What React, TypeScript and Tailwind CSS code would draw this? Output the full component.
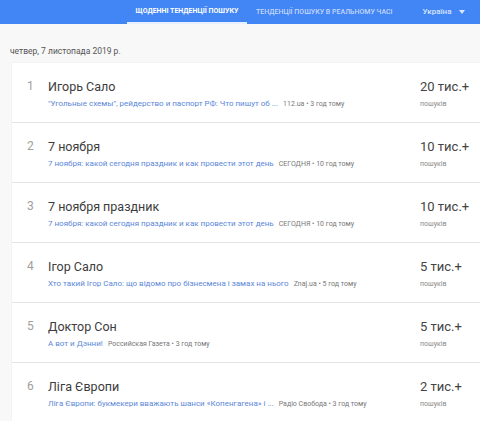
const items = [
  {
    title: "Игорь Сало",
    link: "\"Угольные схемы\", рейдерство и паспорт РФ: Что пишут об ...",
    source: "112.ua • 3 год тому",
    count: "20 тис.+",
  },
  {
    title: "7 ноября",
    link: "7 ноября: какой сегодня праздник и как провести этот день",
    source: "СЕГОДНЯ • 10 год тому",
    count: "10 тис.+",
  },
  {
    title: "7 ноября праздник",
    link: "7 ноября: какой сегодня праздник и как провести этот день",
    source: "СЕГОДНЯ • 10 год тому",
    count: "10 тис.+",
  },
  {
    title: "Ігор Сало",
    link: "Хто такий Ігор Сало: що відомо про бізнесмена і замах на нього",
    source: "Znaj.ua • 5 год тому",
    count: "5 тис.+",
  },
  {
    title: "Доктор Сон",
    link: "А вот и Дэнни!",
    source: "Российская Газета • 3 год тому",
    count: "5 тис.+",
  },
  {
    title: "Ліга Європи",
    link: "Ліга Європи: букмекери вважають шанси «Копенгагена» і ...",
    source: "Радіо Свобода • 3 год тому",
    count: "2 тис.+",
  },
];

export default function App() {
  return (
    <div className="h-[421px] w-[480px] overflow-hidden bg-[#f8f8f8] font-['Roboto',sans-serif]">
      <header className="flex h-6 items-stretch bg-[#4285f4] pl-[127px] text-[7px] uppercase">
        <div className="flex w-[120px] items-center justify-center border-b-2 border-[#e8effd] font-bold text-white">
          Щоденні тенденції пошуку
        </div>
        <div className="ml-[9px] flex items-center font-medium text-[#c5d8fb]">
          Тенденції пошуку в реальному часі
        </div>
        <div className="ml-[30px] flex items-center gap-[8px] text-[8px] font-medium normal-case text-[#dbe6fc]">
          Україна
          <span className="h-0 w-0 border-x-[3px] border-t-[4px] border-x-transparent border-t-[#dbe6fc]" />
        </div>
      </header>
      <div className="pl-[10px] pt-[20px] text-[8.5px] leading-[14px] text-[#555]">четвер, 7 листопада 2019 р.</div>
      <div className="ml-3 mt-[5px] bg-white shadow-[0_0_1px_rgba(0,0,0,0.12)]">
        {items.map((item, i) => (
          <div key={i} className="flex h-[60px] border-b border-[#e4e4e4]">
            <div className="w-[36px] pl-[15px] pt-[15px] text-[12px] leading-4 text-[#9e9e9e]">{i + 1}</div>
            <div className="min-w-0 flex-1 pt-[14px]">
              <div className="text-[12.5px] leading-5 text-[#3c3c3c]">{item.title}</div>
              <div className="whitespace-nowrap text-[8px] leading-[14px]">
                <span className="text-[#5b87d8]">{item.link}</span>
                <span className="ml-[5px] text-[7px] text-[#777]">{item.source}</span>
              </div>
            </div>
            <div className="w-[60px] pt-[14px]">
              <div className="text-[13px] leading-5 text-[#444]">{item.count}</div>
              <div className="text-[7px] leading-[14px] text-[#888]">пошуків</div>
            </div>
          </div>
        ))}
      </div>
    </div>
  );
}
